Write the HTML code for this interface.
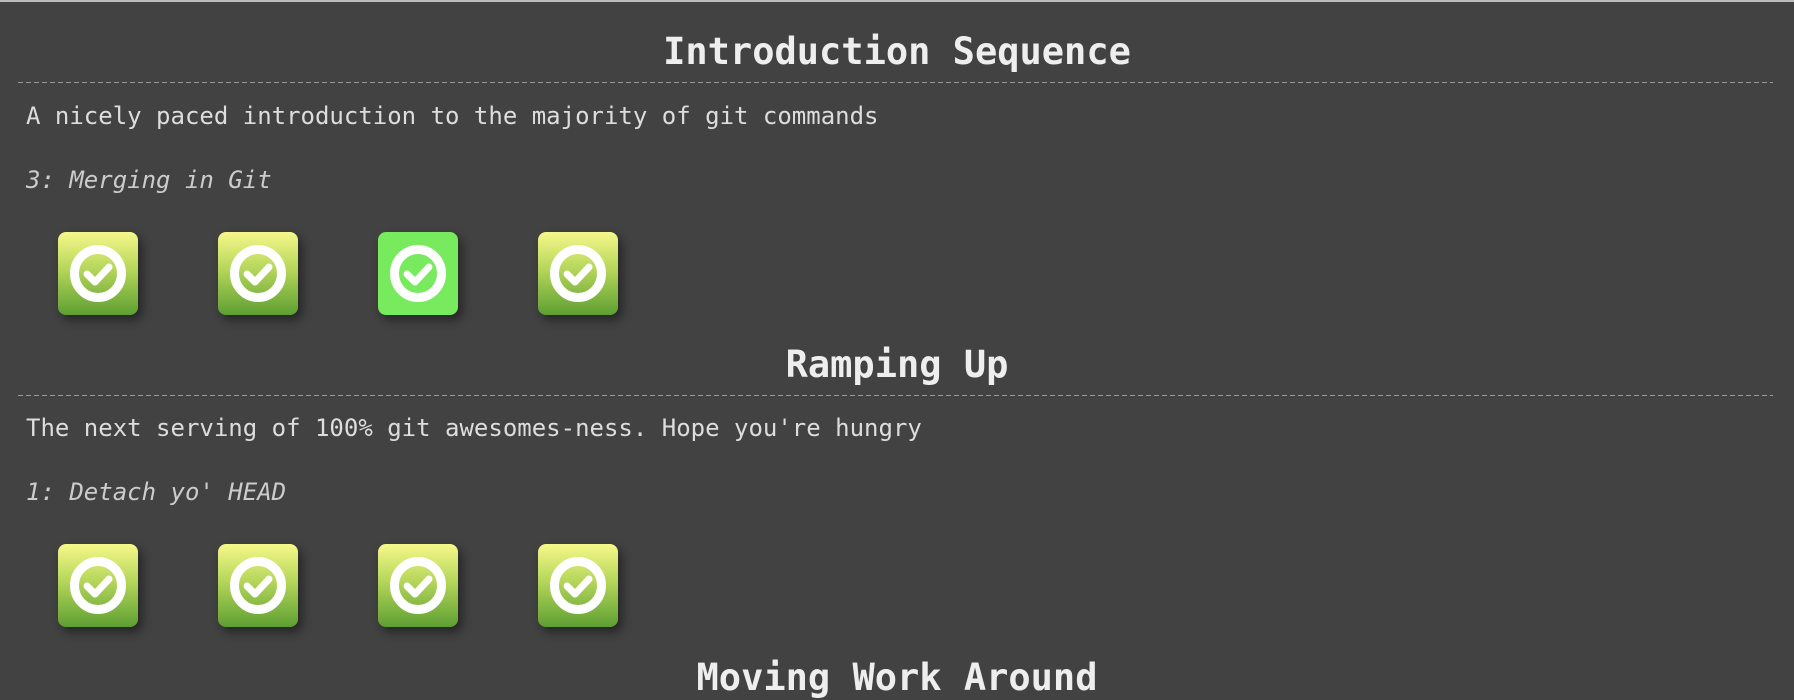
<!DOCTYPE html>
<html><head><meta charset="utf-8"><style>
html,body{margin:0;padding:0;}
body{width:1794px;height:678px;background:#424242;position:relative;overflow:hidden;font-family:"DejaVu Sans Mono","Liberation Mono",monospace;}
.top{position:absolute;left:0;top:0;width:1794px;height:2px;background:#bdbdbd;}
.h{position:absolute;left:0;width:1794px;text-align:center;color:#eee;font-weight:bold;font-size:37px;line-height:44px;}
.line{position:absolute;left:18px;width:1755px;height:1px;background:repeating-linear-gradient(90deg,#999 0 5px,transparent 5px 8px);}
.d{position:absolute;left:26px;color:#ddd;font-size:24px;line-height:30px;white-space:nowrap;}
.i{position:absolute;left:26px;color:#ccc;font-size:24px;line-height:30px;font-style:italic;white-space:nowrap;}
.ic{position:absolute;width:80px;height:83px;border-radius:8px;background:linear-gradient(#f6f88a,#b5d65a 45%,#5e9f32);box-shadow:4px 5px 10px rgba(0,0,0,.45);}
.ic.on{background:#77ea5d;}
.ic svg{position:absolute;left:12px;top:13px;}
</style></head><body>
<div class="top"></div>

<div class="h" style="top:30px">Introduction Sequence</div>
<div class="line" style="top:82px"></div>
<div class="d" style="top:101px">A nicely paced introduction to the majority of git commands</div>
<div class="i" style="top:165px">3: Merging in Git</div>

<div class="ic" style="left:58px;top:232px"><svg width="56" height="57" viewBox="0 0 56 57"><ellipse cx="28" cy="28.5" rx="23.5" ry="24" fill="none" stroke="#fff" stroke-width="9"/><path d="M17 29 L25 37 L39 22" fill="none" stroke="#fff" stroke-width="7" stroke-linecap="round" stroke-linejoin="round"/></svg></div>
<div class="ic" style="left:218px;top:232px"><svg width="56" height="57" viewBox="0 0 56 57"><ellipse cx="28" cy="28.5" rx="23.5" ry="24" fill="none" stroke="#fff" stroke-width="9"/><path d="M17 29 L25 37 L39 22" fill="none" stroke="#fff" stroke-width="7" stroke-linecap="round" stroke-linejoin="round"/></svg></div>
<div class="ic on" style="left:378px;top:232px"><svg width="56" height="57" viewBox="0 0 56 57"><ellipse cx="28" cy="28.5" rx="23.5" ry="24" fill="none" stroke="#fff" stroke-width="9"/><path d="M17 29 L25 37 L39 22" fill="none" stroke="#fff" stroke-width="7" stroke-linecap="round" stroke-linejoin="round"/></svg></div>
<div class="ic" style="left:538px;top:232px"><svg width="56" height="57" viewBox="0 0 56 57"><ellipse cx="28" cy="28.5" rx="23.5" ry="24" fill="none" stroke="#fff" stroke-width="9"/><path d="M17 29 L25 37 L39 22" fill="none" stroke="#fff" stroke-width="7" stroke-linecap="round" stroke-linejoin="round"/></svg></div>

<div class="h" style="top:343px">Ramping Up</div>
<div class="line" style="top:395px"></div>
<div class="d" style="top:413px">The next serving of 100% git awesomes-ness. Hope you're hungry</div>
<div class="i" style="top:477px">1: Detach yo' HEAD</div>

<div class="ic" style="left:58px;top:544px"><svg width="56" height="57" viewBox="0 0 56 57"><ellipse cx="28" cy="28.5" rx="23.5" ry="24" fill="none" stroke="#fff" stroke-width="9"/><path d="M17 29 L25 37 L39 22" fill="none" stroke="#fff" stroke-width="7" stroke-linecap="round" stroke-linejoin="round"/></svg></div>
<div class="ic" style="left:218px;top:544px"><svg width="56" height="57" viewBox="0 0 56 57"><ellipse cx="28" cy="28.5" rx="23.5" ry="24" fill="none" stroke="#fff" stroke-width="9"/><path d="M17 29 L25 37 L39 22" fill="none" stroke="#fff" stroke-width="7" stroke-linecap="round" stroke-linejoin="round"/></svg></div>
<div class="ic" style="left:378px;top:544px"><svg width="56" height="57" viewBox="0 0 56 57"><ellipse cx="28" cy="28.5" rx="23.5" ry="24" fill="none" stroke="#fff" stroke-width="9"/><path d="M17 29 L25 37 L39 22" fill="none" stroke="#fff" stroke-width="7" stroke-linecap="round" stroke-linejoin="round"/></svg></div>
<div class="ic" style="left:538px;top:544px"><svg width="56" height="57" viewBox="0 0 56 57"><ellipse cx="28" cy="28.5" rx="23.5" ry="24" fill="none" stroke="#fff" stroke-width="9"/><path d="M17 29 L25 37 L39 22" fill="none" stroke="#fff" stroke-width="7" stroke-linecap="round" stroke-linejoin="round"/></svg></div>

<div class="h" style="top:656px">Moving Work Around</div>
</body></html>
